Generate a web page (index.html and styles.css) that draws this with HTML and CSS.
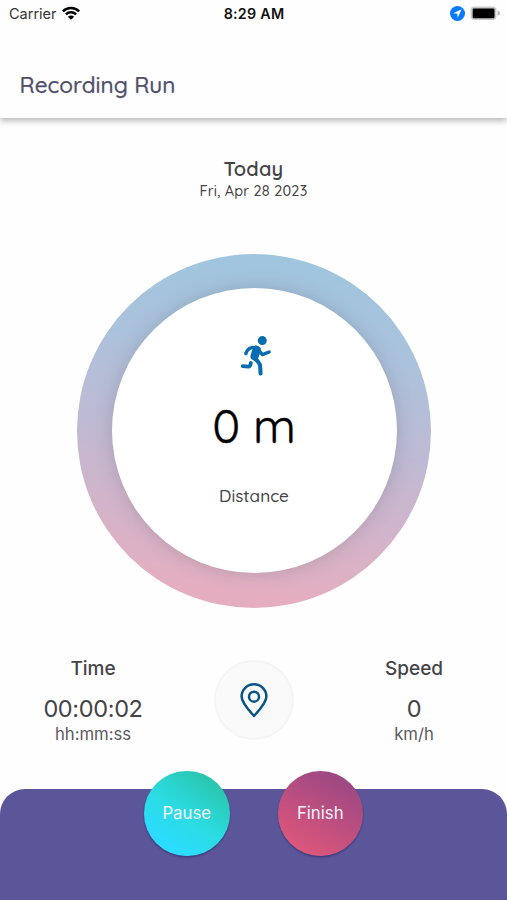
FILE: index.html
```html
<!DOCTYPE html>
<html lang="en">
<head>
<meta charset="utf-8">
<title>Recording Run</title>
<link rel="stylesheet" href="styles.css">
</head>
<body>
<div class="screen">
  <div class="status">
    <div class="status-left"><span class="carrier">Carrier</span>
      <svg class="wifi" viewBox="0 0 18 14"><g fill="none" stroke="#000" stroke-width="2.5"><path d="M.9 5.4a11.4 11.4 0 0 1 16.2 0"/><path d="M3.9 8.4a7.2 7.2 0 0 1 10.2 0"/></g><path d="M9 13.8 5.9 10.7a4.4 4.4 0 0 1 6.2 0z"/></svg>
    </div>
    <span class="clock">8:29 AM</span>
    <div class="status-right">
      <svg class="location" viewBox="0 0 15 15"><circle cx="7.5" cy="7.5" r="7.5" fill="#087aff"/><path d="M11.6 3.3 3.2 7.2l4 .6.6 4z" fill="#fff"/></svg>
      <svg class="battery" viewBox="0 0 30 15"><rect x=".6" y=".6" width="25.8" height="13.3" rx="3.6" fill="#c9c9c9"/><path d="M27.5 4.8q2.7 1 2.7 2.5t-2.7 2.5z" fill="#b5b5b5"/><rect x="2.7" y="2.5" width="21.8" height="9.7" rx="1.2"/></svg>
    </div>
  </div>
  <header class="header"><h1 class="title">Recording Run</h1></header>
  <main class="main">
    <div class="day">Today</div>
    <div class="date">Fri, Apr 28 2023</div>
    <div class="ring">
      <div class="dial">
        <svg class="runner" viewBox="0 0 30 40"><circle cx="21.3" cy="4.6" r="4.5" fill="#086cb0"/><g fill="none" stroke="#086cb0" stroke-linecap="round" stroke-linejoin="round"><path d="M4.8 17.6C6.5 12.4 9 11.2 15.5 11.4" stroke-width="3.4"/><path d="m17.6 14 3.7 4.6 6.8-2.6" stroke-width="3.4"/><path d="M15.6 13.8 13.6 20.3" stroke-width="8.2"/><path d="M13.6 22.4q5.3 4.4 5.5 7.6l.5 7.6" stroke-width="4"/><path d="M9.8 27q-.4 4-2.8 3.7l-5.2-.5" stroke-width="3.8"/></g></svg>
        <div class="distance">0 m</div>
        <div class="distance-label">Distance</div>
      </div>
    </div>
    <section class="stats">
      <div class="stat time"><div class="stat-name">Time</div><div class="stat-value">00:00:02</div><div class="stat-unit">hh:mm:ss</div></div>
      <button class="map" aria-label="Map"><svg class="pin" viewBox="0 0 28 36"><g fill="none" stroke="#085487" stroke-width="2.5" stroke-linejoin="round"><path d="M14 33C9.5 27.8 1.6 20 1.6 13.5a12.4 12.2 0 0 1 24.8 0C26.4 20 18.5 27.8 14 33z"/><circle cx="14" cy="13.7" r="5"/></g></svg></button>
      <div class="stat speed"><div class="stat-name">Speed</div><div class="stat-value">0</div><div class="stat-unit">km/h</div></div>
    </section>
  </main>
  <footer class="panel">
    <button class="action pause">Pause</button>
    <button class="action finish">Finish</button>
  </footer>
</div>
</body>
</html>
```
FILE: styles.css
```css
* { box-sizing: border-box; }
body { margin: 0; background: #fefefe; font-family: Inter, "Liberation Sans", sans-serif; color: #444448; }
button { border: 0; padding: 0; font: inherit; }
svg { display: block; }
.screen { height: 900px; display: flex; flex-direction: column; overflow: hidden; }
.status { height: 28px; flex: none; display: grid; grid-template-columns: 1fr auto 1fr; align-items: center; padding: 0 7px 0 9px; background: #fefefe; position: relative; z-index: 1; }
.status-left, .status-right { display: flex; align-items: center; }
.status-left { gap: 6px; }
.status-right { justify-content: flex-end; gap: 5px; }
.carrier { font-size: 14.5px; line-height: 18px; margin-top: -1px; color: #333; }
.wifi { width: 18px; height: 14px; margin-top: -3px; margin-left: -1px; }
.clock { font-size: 14.3px; line-height: 18px; margin-top: -1px; margin-right: 1px; font-weight: 600; color: #111; letter-spacing: .25px; }
.location { width: 15px; height: 15px; margin-top: -1px; }
.battery { width: 30px; height: 15px; margin-top: -2px; }
.header { height: 90px; flex: none; padding: 43px 20px 0 19.5px; background: #fefefe; box-shadow: 0 3px 6px rgba(0,0,0,.27); }
.title { margin: 0; font: 500 22.5px/28px Quicksand, Inter, sans-serif; color: #50506b; -webkit-text-stroke: .25px #50506b; letter-spacing: .05px; }
.main { height: 671px; flex: none; display: flex; flex-direction: column; align-items: center; padding-top: 39px; }
.day { font: 600 20px/24px Quicksand, Inter, sans-serif; letter-spacing: .2px; }
.date { font: 500 14.5px/18px Quicksand, Inter, sans-serif; letter-spacing: .2px; margin-top: 1px; color: #444; }
.ring { width: 354px; height: 354px; flex: none; margin-top: 53.5px; margin-left: 1px; border-radius: 50%; background: linear-gradient(187deg, #9dc6df 0%, #abc2dc 28%, #c1b9d2 55%, #e5aec0 92%); display: grid; place-items: center; }
.dial { width: 285px; height: 285px; border-radius: 50%; background: #fff; box-shadow: 0 0 18px rgba(80,80,100,.25); display: flex; flex-direction: column; align-items: center; padding-top: 48px; }
.runner { width: 30px; height: 40px; margin-left: 4px; }
.distance { font: 400 47px/56px Quicksand, Inter, sans-serif; margin-top: 22px; color: #000; -webkit-text-stroke: .4px #000; }
.distance-label { font: 500 17.2px/24px Quicksand, Inter, sans-serif; margin-top: 30px; }
.stats { width: 100%; display: grid; grid-template-columns: 186px 1fr 186px; justify-items: center; margin-top: 47.5px; }
.stat { text-align: center; padding-top: 1px; }
.stat-name { font-size: 19px; line-height: 26px; font-weight: 500; }
.stat-value { font-size: 23.5px; line-height: 30px; margin-top: 12px; letter-spacing: -.35px; }
.stat-unit { font-size: 16.7px; line-height: 22px; margin-top: -1px; color: #5b5b5e; }
.map { width: 80px; height: 80px; margin-top: 5px; margin-left: 1px; border: 2px solid #f5f5f5; border-radius: 50%; background: #f9f9f9; display: grid; place-items: center; }
.pin { width: 28px; height: 36px; margin-top: 1px; }
.panel { height: 111px; flex: none; display: flex; justify-content: center; gap: 48px; border-radius: 25px 25px 0 0; background: #5b559a; }
.action { width: 85.5px; height: 85.5px; margin-top: -18.5px; border-radius: 50%; font-size: 16.8px; color: #f5f2fa; box-shadow: 0 1.5px 2px rgba(20,20,70,.4); }
.pause { background: linear-gradient(35deg, #2bdcff 18%, #2bdbe0 50%, #29c5ac 87%); }
.finish { background: linear-gradient(30deg, #de577b 12%, #b84d80 55%, #964884 92%); }
```
